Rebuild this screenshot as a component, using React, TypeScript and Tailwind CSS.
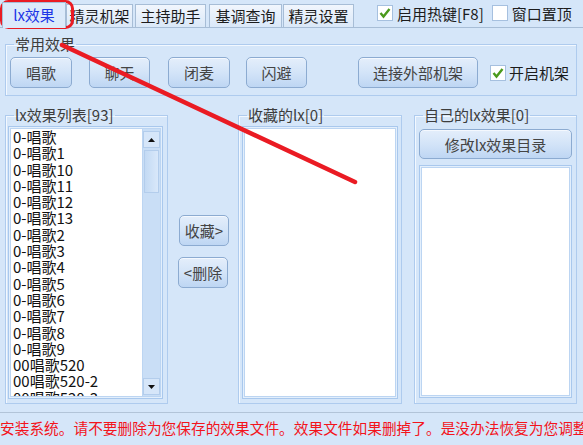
import type { ReactNode } from "react";

const ITEMS = [
    "0-唱歌",
    "0-唱歌1",
    "0-唱歌10",
    "0-唱歌11",
    "0-唱歌12",
    "0-唱歌13",
    "0-唱歌2",
    "0-唱歌3",
    "0-唱歌4",
    "0-唱歌5",
    "0-唱歌6",
    "0-唱歌7",
    "0-唱歌8",
    "0-唱歌9",
    "00唱歌520",
    "00唱歌520-2",
    "00唱歌520-3",
];

const TABS = [
    { label: "精灵机架", cls: "w-[67px]" },
    { label: "主持助手", cls: "w-[71px] ml-[2px]" },
    { label: "基调查询", cls: "w-[73px] ml-[3px]" },
    { label: "精灵设置", cls: "w-[71px] ml-[1px]" },
];

function Btn({ children, className = "" }: { children: ReactNode; className?: string }) {
    return (
        <div
            className={`flex items-center justify-center rounded-[5px] border border-[#8cabd1] bg-linear-to-b from-[#e4eefb] via-[#d3e4f8] to-[#bed6f3] text-[15px] leading-none text-[#444] shadow-[inset_0_1px_0_#f4f8fe] ${className}`}
        >
            {children}
        </div>
    );
}

function Check({ checked }: { checked: boolean }) {
    return (
        <div className="flex h-[16px] w-[16px] shrink-0 items-center justify-center border border-[#a6c0df] bg-white">
            {checked && (
                <svg width="14" height="14" viewBox="0 0 14 14">
                    <path d="M2.5 7 L5.5 10.5 L11.5 3" stroke="#4b9a1c" strokeWidth="2.4" fill="none" />
                </svg>
            )}
        </div>
    );
}

function Group({ title, className = "", children }: { title: string; className?: string; children: ReactNode }) {
    return (
        <fieldset className={`border border-[#aecbee] shadow-[inset_1px_1px_0_#f2f8ff] ${className}`}>
            <legend className="ml-[8px] px-[1px] text-[15px] leading-[16px] text-[#3d3d3d]">{title}</legend>
            {children}
        </fieldset>
    );
}

function ListFrame({ className = "", children }: { className?: string; children?: ReactNode }) {
    return (
        <div className={`border border-[#a9c8ed] bg-[#e3effc] p-[1px] ${className}`}>
            <div className="h-full w-full overflow-hidden border border-[#bcd5f2] bg-white">{children}</div>
        </div>
    );
}

export default function App() {
    return (
        <div className="relative h-[445px] w-[583px] overflow-hidden bg-[#d5e6f9] font-['Noto_Sans_CJK_SC',sans-serif] text-[#1c1c1c]">
            {/* Tab strip */}
            <div className="flex h-[28px] items-end border-b border-[#a7bdd6] pl-[2px]">
                <div className="relative z-10 -mb-px flex h-[26px] w-[64px] items-center justify-center border border-b-0 border-[#a7bdd6] bg-[#dceafa] text-[15px] text-[#1d36e6]">
                    lx效果
                </div>
                {TABS.map((t) => (
                    <div
                        key={t.label}
                        className={`flex h-[23px] items-center justify-center border border-b-0 border-[#a7bdd6] bg-linear-to-b from-[#f1f6fd] to-[#dae8f8] text-[15px] ${t.cls}`}
                    >
                        {t.label}
                    </div>
                ))}
                <div className="mb-[6px] ml-[23px] flex items-center self-end">
                    <Check checked />
                    <span className="ml-[4px] text-[15px] leading-none">启用热键[F8]</span>
                </div>
                <div className="mb-[6px] ml-[8px] flex items-center self-end">
                    <Check checked={false} />
                    <span className="ml-[4px] text-[15px] leading-none">窗口置顶</span>
                </div>
            </div>

            {/* Common effects */}
            <Group title="常用效果" className="ml-[5px] mt-[8px] h-[60px] w-[572px]">
                <div className="flex items-center pl-[4px] pt-[5px]">
                    <Btn className="h-[31px] w-[62px]">唱歌</Btn>
                    <Btn className="ml-[17px] h-[31px] w-[61px]">聊天</Btn>
                    <Btn className="ml-[18px] h-[31px] w-[62px]">闭麦</Btn>
                    <Btn className="ml-[16px] h-[31px] w-[61px]">闪避</Btn>
                    <Btn className="ml-[51px] h-[31px] w-[120px]">连接外部机架</Btn>
                    <div className="ml-[12px] flex items-center">
                        <Check checked />
                        <span className="ml-[3px] text-[15px] leading-none">开启机架</span>
                    </div>
                </div>
            </Group>

            {/* Lists */}
            <div className="mt-[11px] flex h-[297px]">
                <Group title="lx效果列表[93]" className="ml-[5px] h-full w-[163px]">
                    <ListFrame className="ml-[2px] mt-[3px] h-[273px] w-[155px]">
                        <div className="flex h-full">
                            <div className="flex-1 pl-[2px] text-[15px] text-[#111]">
                                {ITEMS.map((it) => (
                                    <div key={it} className="h-[16.3px] whitespace-nowrap leading-[16px]">
                                        {it}
                                    </div>
                                ))}
                            </div>
                            <div className="flex w-[18px] flex-col border-l border-[#bcd5f2] bg-[#c9def6] pt-[2px]">
                                <div className="flex h-[17px] items-center justify-center border border-[#b3cdec] bg-[#d6e6f9]">
                                    <svg width="7" height="4" viewBox="0 0 7 4">
                                        <path d="M0 4 L3.5 0 L7 4 Z" fill="#111" />
                                    </svg>
                                </div>
                                <div className="mx-[1px] mt-[2px] h-[43px] border border-[#b3cdec] bg-linear-to-r from-[#c3daf4] to-[#d9e8fa]" />
                                <div className="flex-1" />
                                <div className="mb-[1px] flex h-[17px] items-center justify-center border border-[#b3cdec] bg-[#d6e6f9]">
                                    <svg width="7" height="4" viewBox="0 0 7 4">
                                        <path d="M0 0 L3.5 4 L7 0 Z" fill="#111" />
                                    </svg>
                                </div>
                            </div>
                        </div>
                    </ListFrame>
                </Group>

                <div className="flex w-[70px] flex-col pl-[10px] pt-[108px]">
                    <Btn className="ml-[1px] h-[31px] w-[50px] text-[15px]">收藏&gt;</Btn>
                    <Btn className="mt-[11px] h-[31px] w-[50px] text-[15px]">&lt;删除</Btn>
                </div>

                <Group title="收藏的lx[0]" className="h-full w-[164px]">
                    <ListFrame className="ml-[3px] mt-[3px] h-[273px] w-[156px]" />
                </Group>

                <Group title="自己的lx效果[0]" className="ml-[12px] h-full w-[163px]">
                    <Btn className="ml-[4px] mt-[6px] h-[30px] w-[153px]">修改lx效果目录</Btn>
                    <ListFrame className="ml-[4px] mt-[6px] h-[233px] w-[153px]" />
                </Group>
            </div>

            {/* Status line */}
            <div className="mt-[8px] border-t border-[#b2c4d8]" />
            <div className="mt-[5px] whitespace-nowrap text-[14.7px] leading-[20px] text-[#f3141c]">
                安装系统。请不要删除为您保存的效果文件。效果文件如果删掉了。是没办法恢复为您调整的效果
            </div>

            {/* Red annotation drawn over the screenshot */}
            <svg className="pointer-events-none absolute inset-0" width="583" height="445" viewBox="0 0 583 445">
                <rect x="1.5" y="1.5" width="71" height="26" rx="7" fill="none" stroke="#ea1b23" strokeWidth="3" />
                <line x1="62" y1="45" x2="355" y2="182" stroke="#ea1b23" strokeWidth="4.5" strokeLinecap="round" />
            </svg>
        </div>
    );
}
